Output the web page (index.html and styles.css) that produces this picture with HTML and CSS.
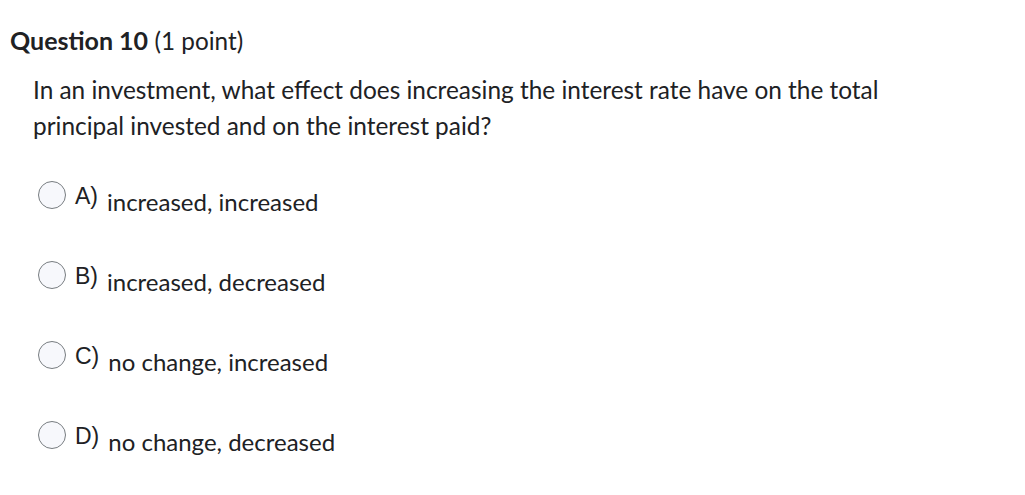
FILE: index.html
```html
<!DOCTYPE html>
<html>
<head>
<meta charset="utf-8">
<link rel="stylesheet" href="styles.css">
</head>
<body>
<div class="question">
  <h2 class="q-title"><strong>Question 10</strong> <span class="pts">(1 point)</span></h2>
  <p class="q-text">In an investment, what effect does increasing the interest rate have on the total principal invested and on the interest paid?</p>
  <ul class="options">
    <li class="option"><span class="radio"></span><span class="letter">A)</span><span class="ans">increased, increased</span></li>
    <li class="option"><span class="radio"></span><span class="letter">B)</span><span class="ans">increased, decreased</span></li>
    <li class="option"><span class="radio"></span><span class="letter">C)</span><span class="ans">no change, increased</span></li>
    <li class="option"><span class="radio"></span><span class="letter">D)</span><span class="ans">no change, decreased</span></li>
  </ul>
</div>
</body>
</html>
```
FILE: styles.css
```css
html, body {
  margin: 0;
  padding: 0;
  background: #ffffff;
}
body {
  font-family: Lato, "Liberation Sans", sans-serif;
  color: #202124;
  min-height: 495px;
}
.question {
  padding: 25px 0 40px 10px;
}
.q-title {
  margin: 0;
  font-size: 25px;
  font-weight: normal;
  line-height: 30px;
}
.q-title strong {
  font-weight: 700;
}
.pts {
  font-weight: 400;
  font-size: 24.3px;
}
.q-text {
  margin: 16px 0 0 23px;
  width: 880px;
  font-size: 24.4px;
  line-height: 36px;
}
.options {
  list-style: none;
  margin: 36px 0 0 28px;
  padding: 0;
  display: flex;
  flex-direction: column;
  gap: 50px;
}
.option {
  display: flex;
  align-items: center;
  height: 30px;
}
.radio {
  width: 28px;
  height: 28px;
  border: 1px solid #777c80;
  border-radius: 50%;
  background: #f7f8fc;
  box-sizing: border-box;
  flex: none;
}
.letter {
  font-family: "Liberation Sans", Arial, sans-serif;
  font-size: 23px;
  margin-left: 9px;
  position: relative;
  top: 1px;
}
.ans {
  font-size: 24px;
  margin-left: 9px;
  position: relative;
  top: 6px;
}
```
